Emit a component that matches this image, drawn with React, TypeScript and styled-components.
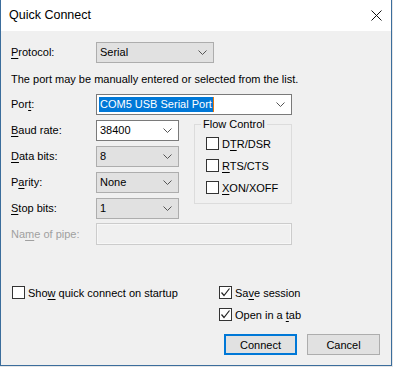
import styled, { createGlobalStyle } from "styled-components";

const GlobalStyles = createGlobalStyle`
  *, *::before, *::after {
    box-sizing: border-box;
  }

  * {
    margin: 0;
    padding: 0;
  }

  body {
    background: #e6e6e6;
    font-family: "Liberation Sans", Arial, sans-serif;
    font-size: 11px;
    color: #000;
    -webkit-font-smoothing: antialiased;
  }
`;

const Chevron = () => (
  <svg width="9" height="5" viewBox="0 0 9 5">
    <polyline points="0.5,0.5 4.5,4.5 8.5,0.5" fill="none" stroke="#555" strokeWidth="1" />
  </svg>
);

const Check = () => (
  <svg width="11" height="11" viewBox="0 0 11 11">
    <polyline points="1.5,5.5 4,8.5 9.5,1.5" fill="none" stroke="#222" strokeWidth="1.2" />
  </svg>
);

type CheckProps = { label: React.ReactNode; checked?: boolean };

const CheckItem = ({ label, checked }: CheckProps) => (
  <CheckRow>
    <Box>{checked && <Check />}</Box>
    <span>{label}</span>
  </CheckRow>
);

const App = () => {
  return (
    <Window>
      <GlobalStyles />

      <TitleBar>
        <Title>Quick Connect</Title>
        <Close>
          <svg width="11" height="11" viewBox="0 0 11 11">
            <path d="M0.5 0.5 L10.5 10.5 M10.5 0.5 L0.5 10.5" stroke="#111" strokeWidth="1" />
          </svg>
        </Close>
      </TitleBar>

      <Body>
        <Form>
          <Label>
            <u>P</u>rotocol:
          </Label>
          <Select $width={118} style={{ gridColumn: "2 / -1" }}>
            <span>Serial</span>
            <Chevron />
          </Select>

          <Hint>The port may be manually entered or selected from the list.</Hint>

          <Label>
            Por<u>t</u>:
          </Label>
          <Select $white style={{ gridColumn: "2 / -1" }}>
            <PortText>
              <Selected>COM5 USB Serial Port</Selected>
              <Caret />
            </PortText>
            <Chevron />
          </Select>

          <Label>
            <u>B</u>aud rate:
          </Label>
          <Select $white>
            <span>38400</span>
            <Chevron />
          </Select>

          <FlowGroup>
            <legend>Flow Control</legend>
            <FlowList>
              <CheckItem label={<>D<u>T</u>R/DSR</>} />
              <CheckItem label={<><u>R</u>TS/CTS</>} />
              <CheckItem label={<><u>X</u>ON/XOFF</>} />
            </FlowList>
          </FlowGroup>

          <Label>
            <u>D</u>ata bits:
          </Label>
          <Select>
            <span>8</span>
            <Chevron />
          </Select>

          <Label>
            P<u>a</u>rity:
          </Label>
          <Select>
            <span>None</span>
            <Chevron />
          </Select>

          <Label>
            <u>S</u>top bits:
          </Label>
          <Select>
            <span>1</span>
            <Chevron />
          </Select>

          <Label $disabled>
            Na<u>m</u>e of pipe:
          </Label>
          <PipeInput />
        </Form>

        <Footer>
          <StartupCheck>
            <CheckItem label={<>Sho<u>w</u> quick connect on startup</>} />
          </StartupCheck>
          <RightColumn>
            <CheckItem checked label={<>Sa<u>v</u>e session</>} />
            <CheckItem checked label={<>Open in a <u>t</u>ab</>} />
            <Buttons>
              <Button $default>Connect</Button>
              <Button>Cancel</Button>
            </Buttons>
          </RightColumn>
        </Footer>
      </Body>
    </Window>
  );
};

export default App;

const Window = styled.div`
  width: 392px;
  height: 366px;
  background: #f0f0f0;
  border: 1px solid #3b6d9c;
  border-top: none;
  display: flex;
  flex-direction: column;
`;

const TitleBar = styled.div`
  height: 31px;
  background: #fff;
  display: flex;
  align-items: center;
  justify-content: space-between;
  padding: 0 9px 1px 8px;
`;

const Title = styled.div`
  font-size: 12.5px;
`;

const Close = styled.div`
  display: flex;
  width: 11px;
  height: 11px;
`;

const Body = styled.div`
  flex: 1;
  padding: 8px 10px 0 10px;
`;

const Form = styled.div`
  display: grid;
  grid-template-columns: 85px 83px 15px 98px;
  grid-auto-rows: 26px;
  align-items: center;
`;

const Label = styled.div<{ $disabled?: boolean }>`
  grid-column: 1;
  color: ${(p) => (p.$disabled ? "#a0a0a0" : "#000")};
  line-height: 14px;

  u {
    text-underline-offset: 2px;
  }
`;

const Hint = styled.div`
  grid-column: 1 / -1;
  line-height: 14px;
  padding-top: 1px;
  white-space: nowrap;
`;

const Select = styled.div<{ $white?: boolean; $width?: number }>`
  grid-column: 2;
  height: 21px;
  width: ${(p) => (p.$width ? `${p.$width}px` : "auto")};
  justify-self: ${(p) => (p.$width ? "start" : "stretch")};
  background: ${(p) => (p.$white ? "#fff" : "#e1e1e1")};
  border: 1px solid ${(p) => (p.$white ? "#7a7a7a" : "#adadad")};
  display: flex;
  align-items: center;
  justify-content: space-between;
  padding: 0 6px 0 3px;
`;

const PortText = styled.div`
  display: flex;
  align-items: center;
`;

const Selected = styled.span`
  background: #0078d7;
  color: #fff;
  line-height: 15px;
  padding: 0 1px 0 1px;
  margin-left: -1px;
`;

const Caret = styled.span`
  width: 1px;
  height: 15px;
  background: #e8780e;
`;

const FlowGroup = styled.fieldset`
  grid-column: 4;
  grid-row: 4 / span 4;
  align-self: start;
  height: 87px;
  border: 1px solid #dcdcdc;
  padding: 0 0 0 6px;

  legend {
    padding: 0 2px;
    line-height: 14px;
  }
`;

const FlowList = styled.div`
  display: flex;
  flex-direction: column;
  gap: 9px;
  padding: 6px 0 0 5px;
`;

const CheckRow = styled.div`
  display: flex;
  align-items: center;
  gap: 3px;
  height: 13px;
  line-height: 14px;
  white-space: nowrap;

  u {
    text-underline-offset: 2px;
  }
`;

const Box = styled.div`
  width: 13px;
  height: 13px;
  border: 1px solid #333;
  background: #fff;
  display: flex;
  align-items: center;
  justify-content: center;
`;

const PipeInput = styled.div`
  grid-column: 2 / -1;
  height: 22px;
  border: 1px solid #cccccc;
  box-shadow: inset 0 0 0 1px #f7f7f7;
  background: #f0f0f0;
`;

const Footer = styled.div`
  display: flex;
  justify-content: space-between;
  margin-top: 39px;
  padding-right: 1px;
`;

const StartupCheck = styled.div`
  padding-left: 1px;
`;

const RightColumn = styled.div`
  width: 161px;
  display: flex;
  flex-direction: column;
  gap: 9px;
`;

const Buttons = styled.div`
  display: flex;
  gap: 10px;
  margin: 4px 0 0 5px;
`;

const Button = styled.button<{ $default?: boolean }>`
  width: 73px;
  height: 21px;
  background: #e1e1e1;
  border: ${(p) => (p.$default ? "2px solid #0078d7" : "1px solid #adadad")};
  font-family: inherit;
  font-size: 11px;
  color: #000;
`;
